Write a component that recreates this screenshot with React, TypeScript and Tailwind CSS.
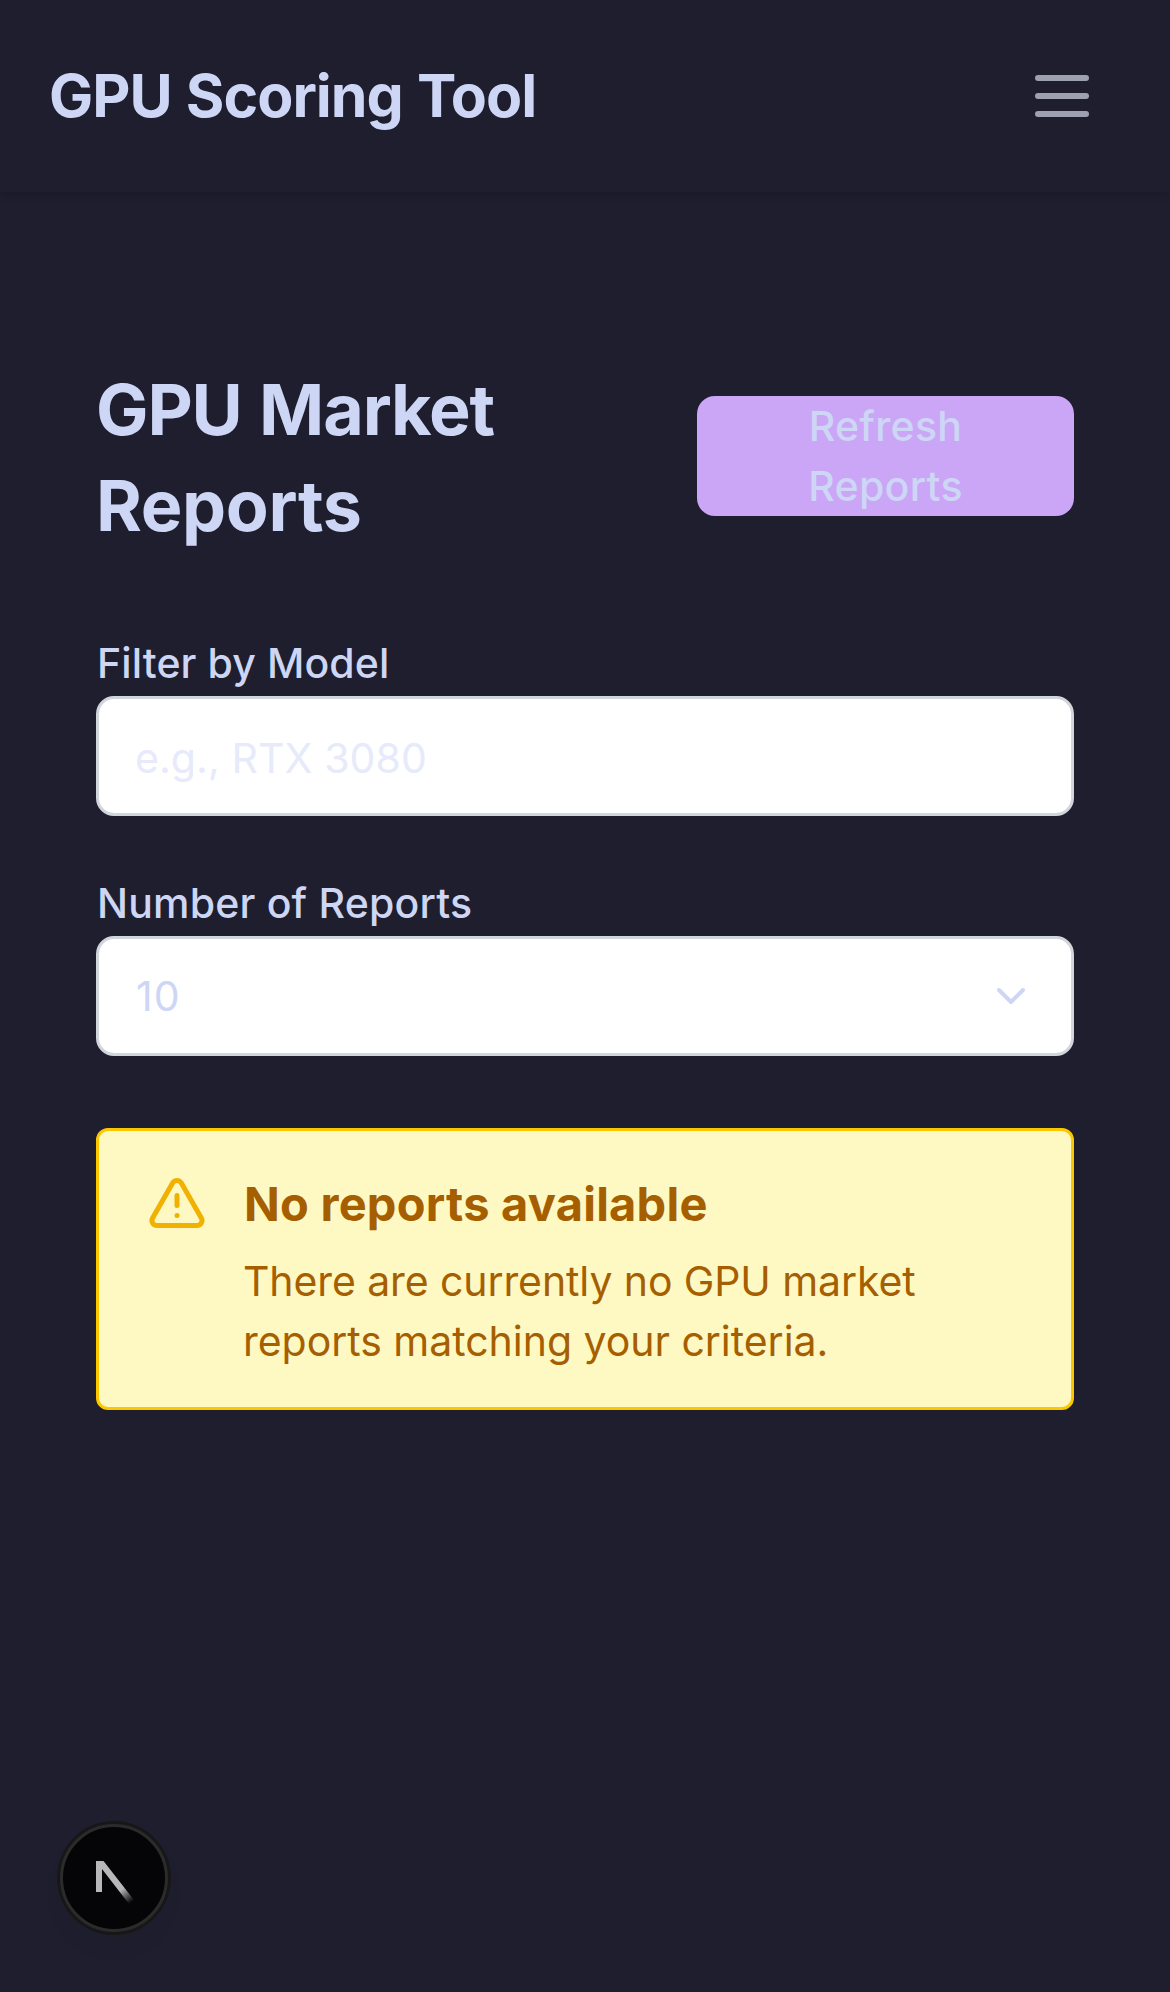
import { TriangleAlert } from 'lucide-react';

function Header() {
  return (
    <header className="flex h-48 items-center justify-between pr-[81px] pl-[49px] shadow-[0_3px_9px_rgba(0,0,0,0.1),0_3px_6px_-3px_rgba(0,0,0,0.1)]">
      <span className="text-[59px] leading-[84px] font-bold tracking-[-1px] whitespace-nowrap [word-spacing:1.2px]">GPU Scoring Tool</span>
      <button aria-label="Open menu" className="flex w-[54px] flex-col gap-3">
        <span className="h-1.5 rounded-full bg-[#9ca0b0]" />
        <span className="h-1.5 rounded-full bg-[#9ca0b0]" />
        <span className="h-1.5 rounded-full bg-[#9ca0b0]" />
      </button>
    </header>
  );
}

function Filters() {
  return (
    <div className="mt-[81px] flex flex-col gap-[57px]">
      <div className="flex flex-col gap-[3px]">
        <label htmlFor="model" className="pl-px text-[41px] leading-[60px] font-medium tracking-[0.1px]">
          Filter by Model
        </label>
        <input
          id="model"
          placeholder="e.g., RTX 3080"
          className="h-[120px] w-full rounded-[18px] border-3 border-[#d1d5dc] bg-white px-9 pt-1 text-[41px] tracking-[0.08px] outline-none placeholder:text-[#e6eafa] placeholder:opacity-100"
        />
      </div>
      <div className="flex flex-col gap-[3px]">
        <span className="pl-px text-[41px] leading-[60px] font-medium tracking-[0.19px]">Number of Reports</span>
        <button className="flex h-[120px] w-full items-center justify-between rounded-[18px] border-3 border-[#d1d5dc] bg-white pr-[45px] pl-[37px] text-[41px] leading-[60px] tracking-[1px]">
          10
          <svg width="30" height="18" viewBox="0 0 30 18" fill="none" stroke="currentColor" strokeWidth="4" strokeLinecap="round" strokeLinejoin="round">
            <path d="M3 3l12 12L27 3" />
          </svg>
        </button>
      </div>
    </div>
  );
}

function EmptyNotice() {
  return (
    <div className="mt-[72px] flex h-[282px] rounded-xl border-3 border-[#fdc700] bg-[#fef9c2] pt-[37px] pl-12 text-[#a65f00]">
      <TriangleAlert className="mt-[5px] shrink-0 text-[#f0b100]" size={60} />
      <div className="ml-9">
        <h3 className="pl-px text-[47px] leading-[72px] font-bold tracking-[0.22px]">No reports available</h3>
        <p className="mt-[11px] text-[41px] leading-[60px] whitespace-nowrap">
          <span className="tracking-[-0.1px]">There are currently no GPU market</span>
          <br />
          <span className="tracking-[-0.03px]">reports matching your criteria.</span>
        </p>
      </div>
    </div>
  );
}

function DevBadge() {
  return (
    <div className="fixed bottom-[60px] left-[60px] flex size-[108px] rounded-full border-3 border-[#2b2b2b] bg-[#050507] shadow-[0_0_0_3px_#171717,0_16px_32px_-8px_rgba(0,0,0,0.06)]">
      <svg width="102" height="102" viewBox="0 0 102 102" fill="none">
        <defs>
          <linearGradient id="fade" x1="60" y1="61" x2="70" y2="74" gradientUnits="userSpaceOnUse">
            <stop stopColor="#b8b8b8" />
            <stop offset="1" stopColor="#b8b8b8" stopOpacity="0" />
          </linearGradient>
        </defs>
        <path d="M33 34h7.5L71 73l-5 4L39 42v23h-6z" fill="url(#fade)" />
        <path d="M33 34h6v31h-6z" fill="#b8b8b8" />
      </svg>
    </div>
  );
}

export default function App() {
  return (
    <div className="min-h-screen bg-[#1e1e2e] font-[Inter,sans-serif] text-[#cdd6f4]">
      <Header />
      <main className="px-24 pt-[168px]">
        <div className="flex h-48 items-center justify-between">
          <h1 className="w-[480px] pt-[3px] text-[70px] leading-[96px] font-bold">
            <span className="tracking-[-1.15px] [word-spacing:2px]">GPU Market</span> <span className="tracking-[-0.36px]">Reports</span>
          </h1>
          <button className="h-[120px] w-[377px] rounded-[18px] bg-[#cba6f7] px-12 text-[41px] leading-[60px] font-medium tracking-[0.3px]">
            Refresh
            <br />
            Reports
          </button>
        </div>
        <Filters />
        <EmptyNotice />
      </main>
      <DevBadge />
    </div>
  );
}
